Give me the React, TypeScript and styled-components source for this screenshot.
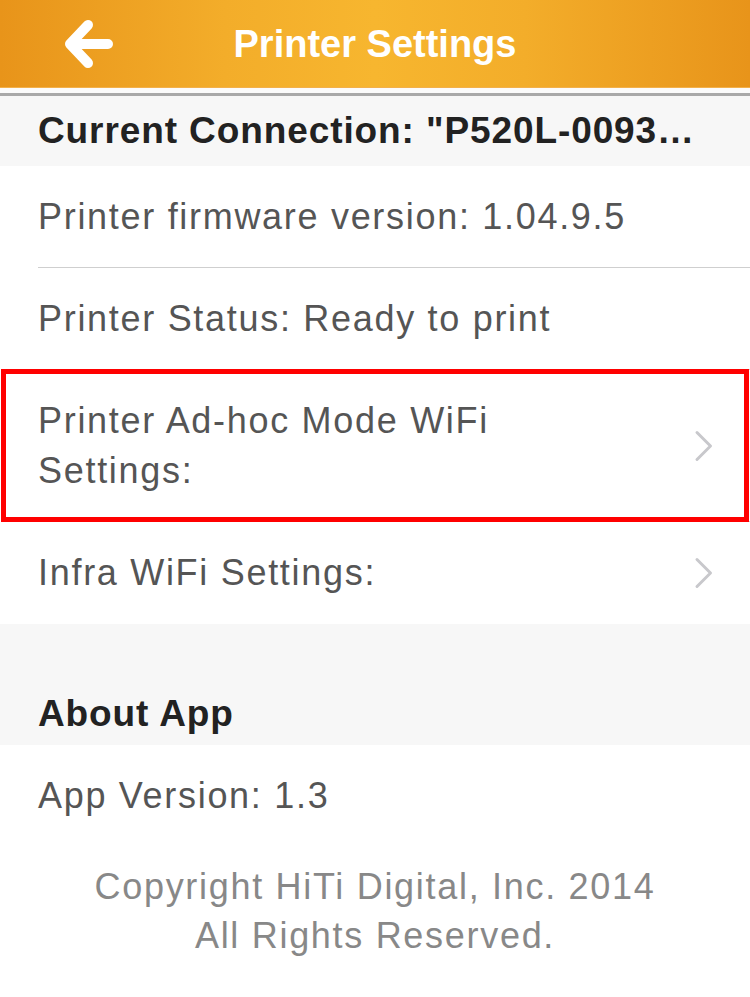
import React from "react";
import styled, { createGlobalStyle } from "styled-components";

const GlobalStyle = createGlobalStyle`
  html, body {
    margin: 0;
    padding: 0;
    background: #ffffff;
  }
  body {
    font-family: "Liberation Sans", Arial, Helvetica, sans-serif;
    -webkit-font-smoothing: antialiased;
  }
`;

const Screen = styled.div`
  width: 750px;
  min-height: 997px;
  background: #ffffff;
  display: flex;
  flex-direction: column;
  overflow: hidden;
`;

const NavBar = styled.header`
  height: 88px;
  display: grid;
  grid-template-columns: 1fr auto 1fr;
  align-items: center;
  background: linear-gradient(to right, #e8941a 0%, #f3ad2a 30%, #f7b62f 50%, #f3ad2a 70%, #e8941a 100%);
  box-shadow: inset 0 -1px 0 #f3b04a;
`;

const BackButton = styled.button`
  justify-self: start;
  margin-left: 56px;
  width: 64px;
  height: 64px;
  padding: 0;
  border: none;
  background: transparent;
  display: flex;
  align-items: center;
  justify-content: center;
  cursor: pointer;
`;

const Title = styled.h1`
  margin: 0;
  color: #ffffff;
  font-size: 38px;
  font-weight: 700;
  letter-spacing: 0;
`;

const NavRule = styled.div`
  height: 5px;
  background: #fbfbfb;
  border-bottom: 3px solid #a9a9a9;
`;

const SectionHeader = styled.div<{ $top?: number; $height: number }>`
  height: ${(p) => p.$height}px;
  box-sizing: border-box;
  padding: ${(p) => p.$top ?? 0}px 38px 0 38px;
  background: #f7f7f7;
  display: flex;
  align-items: ${(p) => (p.$top ? "flex-start" : "center")};
  color: #222222;
  font-size: 37px;
  font-weight: 700;
  letter-spacing: 0.9px;
  line-height: 50px;
  white-space: nowrap;
`;

const List = styled.div`
  display: flex;
  flex-direction: column;
  background: #ffffff;
`;

const Row = styled.div<{ $divider?: boolean; $highlight?: boolean }>`
  position: relative;
  display: flex;
  align-items: center;
  justify-content: space-between;
  padding: 26px 38px 26px 38px;
  ${(p) =>
    p.$divider
      ? `
    &::before {
      content: "";
      position: absolute;
      left: 38px;
      right: 0;
      bottom: 0;
      height: 1px;
      background: #cfcfcf;
    }
  `
      : ""}
  ${(p) =>
    p.$highlight
      ? `
    &::after {
      content: "";
      position: absolute;
      left: 1px;
      right: 1px;
      top: -1px;
      bottom: 0px;
      border: 5px solid #ff0000;
      pointer-events: none;
    }
  `
      : ""}
`;

const RowText = styled.span`
  color: #555555;
  font-size: 36px;
  letter-spacing: 1.7px;
  line-height: 50px;
  max-width: 600px;
`;

const ChevronIcon = styled.svg`
  flex: none;
  width: 20px;
  height: 32px;
  margin-right: -2px;
`;

const Footer = styled.p`
  margin: 15px 0 0 0;
  text-align: center;
  color: #888888;
  font-size: 36px;
  letter-spacing: 1.7px;
  line-height: 49px;
`;

const Chevron = () => (
  <ChevronIcon viewBox="0 0 20 32" aria-hidden>
    <path
      d="M3 2.5 L16.5 16 L3 29.5"
      fill="none"
      stroke="#c8c8cc"
      strokeWidth="3"
      strokeLinecap="round"
      strokeLinejoin="round"
    />
  </ChevronIcon>
);

const BackArrow = () => (
  <svg width="64" height="64" viewBox="0 0 64 64" aria-hidden>
    <path
      d="M52 32 H15 M32 13 L14 32 L32 51"
      fill="none"
      stroke="#ffffff"
      strokeWidth="10"
      strokeLinecap="round"
      strokeLinejoin="round"
    />
  </svg>
);

export default function App() {
  return (
    <>
      <GlobalStyle />
      <Screen>
        <NavBar>
          <BackButton aria-label="Back">
            <BackArrow />
          </BackButton>
          <Title>Printer Settings</Title>
          <div />
        </NavBar>
        <NavRule />
        <SectionHeader $height={70}>Current Connection: "P520L-0093…</SectionHeader>
        <List>
          <Row $divider>
            <RowText>Printer firmware version: 1.04.9.5</RowText>
          </Row>
          <Row $divider>
            <RowText>Printer Status: Ready to print</RowText>
          </Row>
          <Row $divider $highlight>
            <RowText>Printer Ad-hoc Mode WiFi Settings:</RowText>
            <Chevron />
          </Row>
          <Row>
            <RowText>Infra WiFi Settings:</RowText>
            <Chevron />
          </Row>
        </List>
        <SectionHeader $height={121} $top={65}>About App</SectionHeader>
        <List>
          <Row>
            <RowText>App Version: 1.3</RowText>
          </Row>
        </List>
        <Footer>
          Copyright HiTi Digital, Inc. 2014
          <br />
          All Rights Reserved.
        </Footer>
      </Screen>
    </>
  );
}
